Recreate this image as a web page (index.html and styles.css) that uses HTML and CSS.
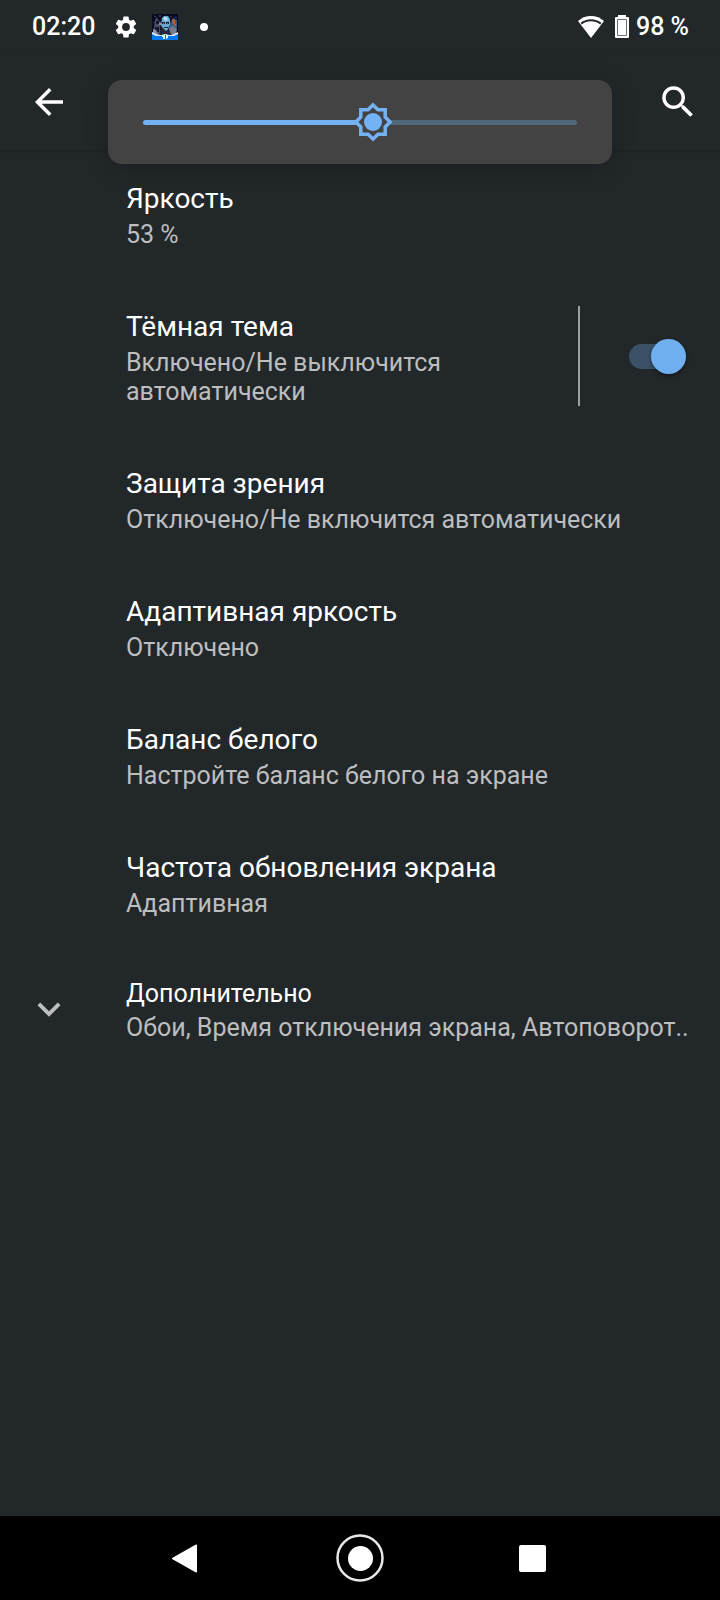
FILE: index.html
```html
<!DOCTYPE html>
<html lang="ru">
<head>
<meta charset="utf-8">
<meta name="viewport" content="width=device-width, initial-scale=1">
<title>Экран</title>
<link rel="stylesheet" href="styles.css">
</head>
<body>
<div class="screen">
  <div class="status">
    <span class="status-time">02:20</span>
    <svg class="status-gear" viewBox="0 0 24 24" aria-hidden="true"><path fill="#fff" d="M19.14 12.94c.04-.3.06-.61.06-.94 0-.32-.02-.64-.07-.94l2.03-1.58a.49.49 0 0 0 .12-.61l-1.92-3.32a.488.488 0 0 0-.59-.22l-2.39.96c-.5-.38-1.03-.7-1.62-.94l-.36-2.54a.484.484 0 0 0-.48-.41h-3.84c-.24 0-.43.17-.47.41l-.36 2.54c-.59.24-1.13.57-1.62.94l-2.39-.96c-.22-.08-.47 0-.59.22L2.74 8.87c-.12.21-.08.47.12.61l2.03 1.58c-.05.3-.09.63-.09.94s.02.64.07.94l-2.03 1.58a.49.49 0 0 0-.12.61l1.92 3.32c.12.22.37.29.59.22l2.39-.96c.5.38 1.03.7 1.62.94l.36 2.54c.05.24.24.41.48.41h3.84c.24 0 .44-.17.47-.41l.36-2.54c.59-.24 1.13-.56 1.62-.94l2.39.96c.22.08.47 0 .59-.22l1.92-3.32c.12-.22.07-.47-.12-.61l-2.01-1.58zM12 15.6A3.6 3.6 0 1 1 12 8.4a3.6 3.6 0 0 1 0 7.200z"/></svg>
    <svg class="status-app" viewBox="0 0 26 26" aria-hidden="true">
      <path fill="#090b20" d="M0 0h26v26H0z"/>
      <path fill="#343a62" d="M2 2h2v1H2zM7 1h2v2H7zM18 2h2v1h-2zM22 3h3v1h-3zM1 8h2v1H1zM10 3h1v1h-1z"/>
      <path fill="#4b4d62" d="M3 6l2-3 1 3 3 2-1 8 2 4H1l1-6z"/>
      <path fill="#18182a" d="M4 7h3v3H4zM3 13h4v5H3z"/>
      <path fill="#8e90a8" d="M1 15l3 1 2 4H1zM7 9h2v2H7z"/>
      <path fill="#345b82" d="M18 9l3-5 4 2v7l-2 7h-6z"/>
      <path fill="#c45a28" d="M20 5l3 1v4h-2zM22 10h2v2h-2z"/>
      <path fill="#747d91" d="M17 14l4-2 4 3-1 5h-7z"/>
      <path fill="#6ba7cf" d="M10 4l2-2h4l2 3v6l-3 6h-3l-3-6z"/>
      <path fill="#b1d9ed" d="M12 3h3l1 3-3 1-2-2z"/>
      <path fill="#112744" d="M10 8h3v2h-3zM14 8h3v2h-3zM12 13h4v1h-4z"/>
      <path fill="#e53854" d="M11 9h1v1h-1zM15 9h1v1h-1z"/>
      <path fill="#25283a" d="M8 16l3-2 3 3 3-2 2 5H8z"/>
      <path fill="#dceeff" d="M0 18l4 2 5 1 4-1 5 1 4-1 4-2v5H0z"/>
      <path fill="#0878f0" d="M0 20l4 2h5l2-1h4l2 1h5l4-2v6H0z"/>
      <path fill="#dff4ff" d="M10 21h3v4h-2v-2h-1zM14 21h2v3l-2 1z"/>
    </svg>
    <span class="status-dot"></span>
    <svg class="status-wifi" viewBox="0 0 26 22" aria-hidden="true"><path fill="#fff" d="M13 0C8 0 3.500 1.900 0 5l13 17L26 5C22.500 1.900 18 0 13 0z"/><path fill="none" stroke="#22272a" stroke-width="2" d="M3.200 7.600C6 5.400 9.300 4.300 13 4.300s7 1.100 9.800 3.300"/></svg>
    <svg class="status-battery" viewBox="0 0 14 23" aria-hidden="true"><path fill="#fff" d="M3 0h8v2h2q1 0 1 1v19q0 1-1 1H1q-1 0-1-1V3q0-1 1-1h2z"/><path fill="none" stroke="#6b7072" d="M2.500 4.500h9v16h-9z"/></svg>
    <span class="status-charge">98 %</span>
  </div>

  <header class="appbar">
    <button class="icon-button" type="button" aria-label="Назад"><svg viewBox="0 0 24 24"><path fill="#fff" d="M20 11H7.830l5.590-5.590L12 4l-8 8 8 8 1.410-1.410L7.830 13H20v-2z"/></svg></button>
    <button class="icon-button" type="button" aria-label="Поиск"><svg viewBox="0 0 24 24"><path fill="#fff" d="M15.500 14h-.79l-.28-.27A6.471 6.471 0 0 0 16 9.500 6.500 6.500 0 1 0 9.500 16c1.610 0 3.090-.59 4.230-1.570l.27.28v.79l5 4.990L20.490 19l-4.990-5zm-6 0C7.010 14 5 11.990 5 9.500S7.010 5 9.500 5 14 7.010 14 9.500 11.990 14 9.500 14z"/></svg></button>
  </header>

  <div class="brightness">
    <div class="slider">
      <input class="slider-input" type="range" min="0" max="100" value="53" aria-label="Яркость">
      <svg class="slider-sun" viewBox="0 0 40 40" aria-hidden="true"><path fill="#434343" stroke="#73b2f5" stroke-width="3.500" d="M20 3L25 7.800H32.200V15L37 20L32.200 25V32.200H25L20 37L15 32.200H7.800V25L3 20L7.800 15V7.800H15z"/><circle cx="20" cy="20" r="9" fill="#73b2f5"/></svg>
    </div>
  </div>

  <main class="list">
    <section class="row"><div class="row-text"><h2 class="title">Яркость</h2><p class="summary">53 %</p></div></section>
    <section class="row">
      <div class="row-text"><h2 class="title" id="dark">Тёмная тема</h2><p class="summary">Включено/Не выключится автоматически</p></div>
      <div class="row-switch"><input class="switch" type="checkbox" role="switch" aria-labelledby="dark" checked></div>
    </section>
    <section class="row"><div class="row-text"><h2 class="title">Защита зрения</h2><p class="summary">Отключено/Не включится автоматически</p></div></section>
    <section class="row"><div class="row-text"><h2 class="title">Адаптивная яркость</h2><p class="summary">Отключено</p></div></section>
    <section class="row"><div class="row-text"><h2 class="title">Баланс белого</h2><p class="summary">Настройте баланс белого на экране</p></div></section>
    <section class="row"><div class="row-text"><h2 class="title">Частота обновления экрана</h2><p class="summary">Адаптивная</p></div></section>
    <section class="row row-more">
      <svg class="chevron" viewBox="0 0 24 24" aria-hidden="true"><path fill="#bdbebf" d="M7.410 8.590L12 13.170l4.590-4.580L18 10l-6 6-6-6z"/></svg>
      <div class="row-text"><h2 class="title">Дополнительно</h2><p class="summary">Обои, Время отключения экрана, Автоповорот..</p></div>
    </section>
  </main>

  <nav class="navbar">
    <button class="nav-button" type="button" aria-label="Назад"><svg viewBox="0 0 48 48"><path fill="#fff" stroke="#fff" stroke-width="2" stroke-linejoin="round" d="M34 11.500v26L11 24.500z"/></svg></button>
    <button class="nav-button" type="button" aria-label="Домой"><svg viewBox="0 0 48 48"><circle cx="24" cy="24" r="22.500" fill="none" stroke="#e8e8e8" stroke-width="2.500"/><circle cx="24.500" cy="24.500" r="12.500" fill="#fff"/></svg></button>
    <button class="nav-button" type="button" aria-label="Недавние"><svg viewBox="0 0 48 48"><rect x="9" y="11" width="27" height="27" rx="2" fill="#fff"/></svg></button>
  </nav>
</div>
</body>
</html>
```

FILE: styles.css
```css
* {
  box-sizing: border-box;
}

body {
  margin: 0;
  background: #22272a;
  color: #fff;
  font-family: Roboto, "Noto Sans", sans-serif;
}

.screen {
  position: relative;
  display: flex;
  flex-direction: column;
  min-height: 100vh;
}

svg {
  display: block;
  flex: none;
}

button {
  padding: 0;
  border: 0;
  background: none;
}

.status {
  display: flex;
  align-items: center;
  height: 53px;
  padding: 0 31px 0 32px;
  font-size: 25px;
  font-weight: 500;
}

.status-gear {
  width: 26px;
  height: 26px;
  margin-left: 18px;
}

.status-app {
  width: 26px;
  height: 26px;
  margin-left: 13px;
}

.status-dot {
  width: 8px;
  height: 8px;
  margin-left: 22px;
  border-radius: 50%;
  background: #fff;
}

.status-wifi {
  width: 26px;
  height: 22px;
  margin-left: auto;
}

.status-battery {
  width: 14px;
  height: 23px;
  margin: 0 7px 0 11px;
}

.appbar {
  display: flex;
  align-items: center;
  justify-content: space-between;
  height: 97px;
  padding: 0 21px 0 28px;
  box-shadow: 0 1px 3px rgba(0, 0, 0, 0.15);
}

.icon-button,
.icon-button svg {
  width: 42px;
  height: 42px;
}

.brightness {
  position: absolute;
  top: 80px;
  left: 15%;
  right: 15%;
  padding: 22px 35px;
  border-radius: 14px;
  background: #434343;
  box-shadow: 0 4px 24px rgba(0, 0, 0, 0.2);
}

.slider {
  position: relative;
  display: flex;
  align-items: center;
  height: 40px;
}

.slider-input {
  appearance: none;
  width: 100%;
  height: 5px;
  margin: 0;
  border-radius: 3px;
  background: linear-gradient(to right, #73b2f5 53%, #51677c 53%);
}

.slider-input::-webkit-slider-thumb {
  appearance: none;
  width: 40px;
  height: 40px;
  background: transparent;
}

.slider-sun {
  position: absolute;
  left: 53%;
  width: 40px;
  height: 40px;
  transform: translateX(-50%);
  pointer-events: none;
}

.list {
  flex: 1;
}

.row {
  display: flex;
  align-items: center;
  padding: 28px 34px 29px 126px;
}

.row-text {
  flex: 1;
  min-width: 0;
}

.title,
.summary {
  margin: 0;
  font-weight: 400;
}

.title {
  font-size: 28px;
  line-height: 42px;
}

.summary {
  color: #bdbebf;
  font-size: 25px;
  line-height: 29px;
}

.row-switch {
  display: flex;
  align-items: center;
  justify-content: flex-end;
  align-self: stretch;
  width: 108px;
  border-left: 2px solid #9c9e9f;
}

.switch {
  appearance: none;
  display: flex;
  align-items: center;
  justify-content: flex-end;
  width: 57px;
  height: 25px;
  margin: 0;
  border-radius: 13px;
  background: #3b5167;
}

.switch::before {
  content: "";
  width: 35px;
  height: 35px;
  flex: none;
  border-radius: 50%;
  background: #70b0ef;
  box-shadow: 0 2px 4px rgba(0, 0, 0, 0.4);
}

.switch:not(:checked) {
  justify-content: flex-start;
}

.row-more {
  padding: 28px 28px 28px 26px;
}

.row-more .title {
  font-size: 25px;
  line-height: 38px;
}

.row-more .summary {
  white-space: nowrap;
}

.chevron {
  width: 46px;
  height: 46px;
  margin-right: 54px;
}

.navbar {
  display: flex;
  align-items: center;
  justify-content: center;
  gap: 126px;
  height: 84px;
  background: #000;
}

.nav-button,
.nav-button svg {
  width: 48px;
  height: 48px;
}
```
